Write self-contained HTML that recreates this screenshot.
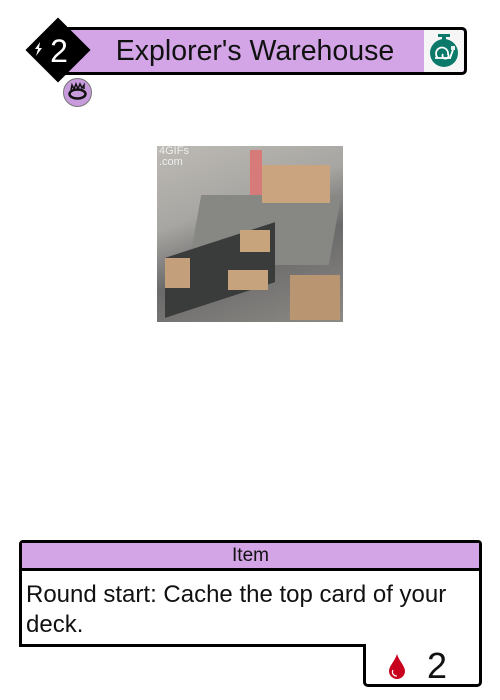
<!DOCTYPE html><html><head><style>
body{margin:0;width:500px;height:700px;background:#fff;font-family:"Liberation Sans",sans-serif;position:relative;overflow:hidden}
.a{position:absolute;box-sizing:border-box}
</style></head><body>
<div class="a" style="left:64px;top:27px;width:403px;height:48px;border:3px solid #000;border-radius:0 5px 5px 0;background:#d3a5e6"></div>
<div class="a" style="left:424px;top:30px;width:40px;height:42px;background:#f6f6f6;border-radius:0 3px 3px 0"></div>
<svg class="a" style="left:426px;top:32px" width="36" height="38" viewBox="0 0 36 38"><rect x="12" y="2" width="12" height="3" fill="#0c7a6a"/><rect x="16" y="4" width="4" height="5" fill="#0c7a6a"/><circle cx="18" cy="21" r="14" fill="#0c7a6a"/><path d="M9 26h16M12 26a6 6 0 1 1 10-4 3 3 0 1 1-5 0M24 26l3-8M26 14v4M28 14v4" stroke="#fff" stroke-width="1.8" fill="none"/></svg>
<div class="a" style="left:74px;top:30px;width:400px;height:42px;text-align:center;font-size:28.5px;line-height:42px;padding-left:12px;padding-right:50px;color:#111;white-space:nowrap">Explorer's Warehouse</div>
<div class="a" style="left:35px;top:27px;width:46px;height:46px;background:#000;transform:rotate(45deg)"></div>
<div class="a" style="left:44px;top:30px;width:30px;height:42px;color:#fff;font-size:32px;line-height:42px;text-align:center">2</div>
<svg class="a" style="left:33px;top:42px" width="10" height="14" viewBox="0 0 10 14"><path d="M7 0L2 7h3L3 14l6-8H6z" fill="#fff"/></svg>
<div class="a" style="left:63px;top:78px;width:29px;height:29px;border-radius:50%;background:#c79bdc;border:1.5px solid #777"></div>
<svg class="a" style="left:66px;top:82px" width="23" height="20"><ellipse cx="11.5" cy="12" rx="8" ry="4.5" fill="none" stroke="#111" stroke-width="2.5"/><path d="M5 8l1-5 2 4 2-5 2 5 2-5 2 4 2-3v4" stroke="#111" stroke-width="1.5" fill="none"/></svg>
<div class="a" style="left:157px;top:146px;width:186px;height:176px;background:linear-gradient(160deg,#bdbab5 0%,#a8a6a2 35%,#6a6a6a 60%,#8d8a85 100%)"></div>
<div class="a" style="left:195px;top:195px;width:140px;height:70px;background:#878784;transform:skewX(-10deg)"></div>
<div class="a" style="left:165px;top:240px;width:110px;height:60px;background:#3a3b3b;transform:skewY(-18deg)"></div>
<div class="a" style="left:262px;top:165px;width:68px;height:38px;background:#c9a47e"></div>
<div class="a" style="left:250px;top:150px;width:12px;height:45px;background:#d77a7a"></div>
<div class="a" style="left:240px;top:230px;width:30px;height:22px;background:#c8a47c"></div>
<div class="a" style="left:290px;top:275px;width:50px;height:45px;background:#b99671"></div>
<div class="a" style="left:165px;top:258px;width:25px;height:30px;background:#c3a07b"></div>
<div class="a" style="left:228px;top:270px;width:40px;height:20px;background:#c6a37c"></div>
<div class="a" style="left:159px;top:146px;color:#eee;font-size:11px;line-height:11px">4GIFs<br>.com</div>
<div class="a" style="left:19px;top:540px;width:463px;height:107px;border:3px solid #000;border-radius:4px 4px 0 0;background:#fff"></div>
<div class="a" style="left:22px;top:543px;width:457px;height:28px;background:#d3a5e6;border-bottom:3px solid #000;text-align:center;font-size:19px;line-height:25px;color:#111">Item</div>
<div class="a" style="left:26px;top:580px;width:445px;font-size:24px;line-height:30px;color:#111">Round start: Cache the top card of your deck.</div>
<div class="a" style="left:363px;top:644px;width:119px;height:43px;border:3px solid #000;border-top:none;border-radius:0 0 5px 5px;background:#fff"></div>
<svg class="a" style="left:387px;top:653px" width="20" height="27" viewBox="0 0 20 27"><path d="M10 1C8 8 2 13 2 18a8 8 0 0 0 16 0C18 13 12 8 10 1z" fill="#c8001e"/><path d="M6 17a4 4 0 0 0 4 6" stroke="#fff" stroke-width="1.2" fill="none"/></svg>
<div class="a" style="left:427px;top:646px;font-size:36px;line-height:40px;color:#111">2</div>
</body></html>
